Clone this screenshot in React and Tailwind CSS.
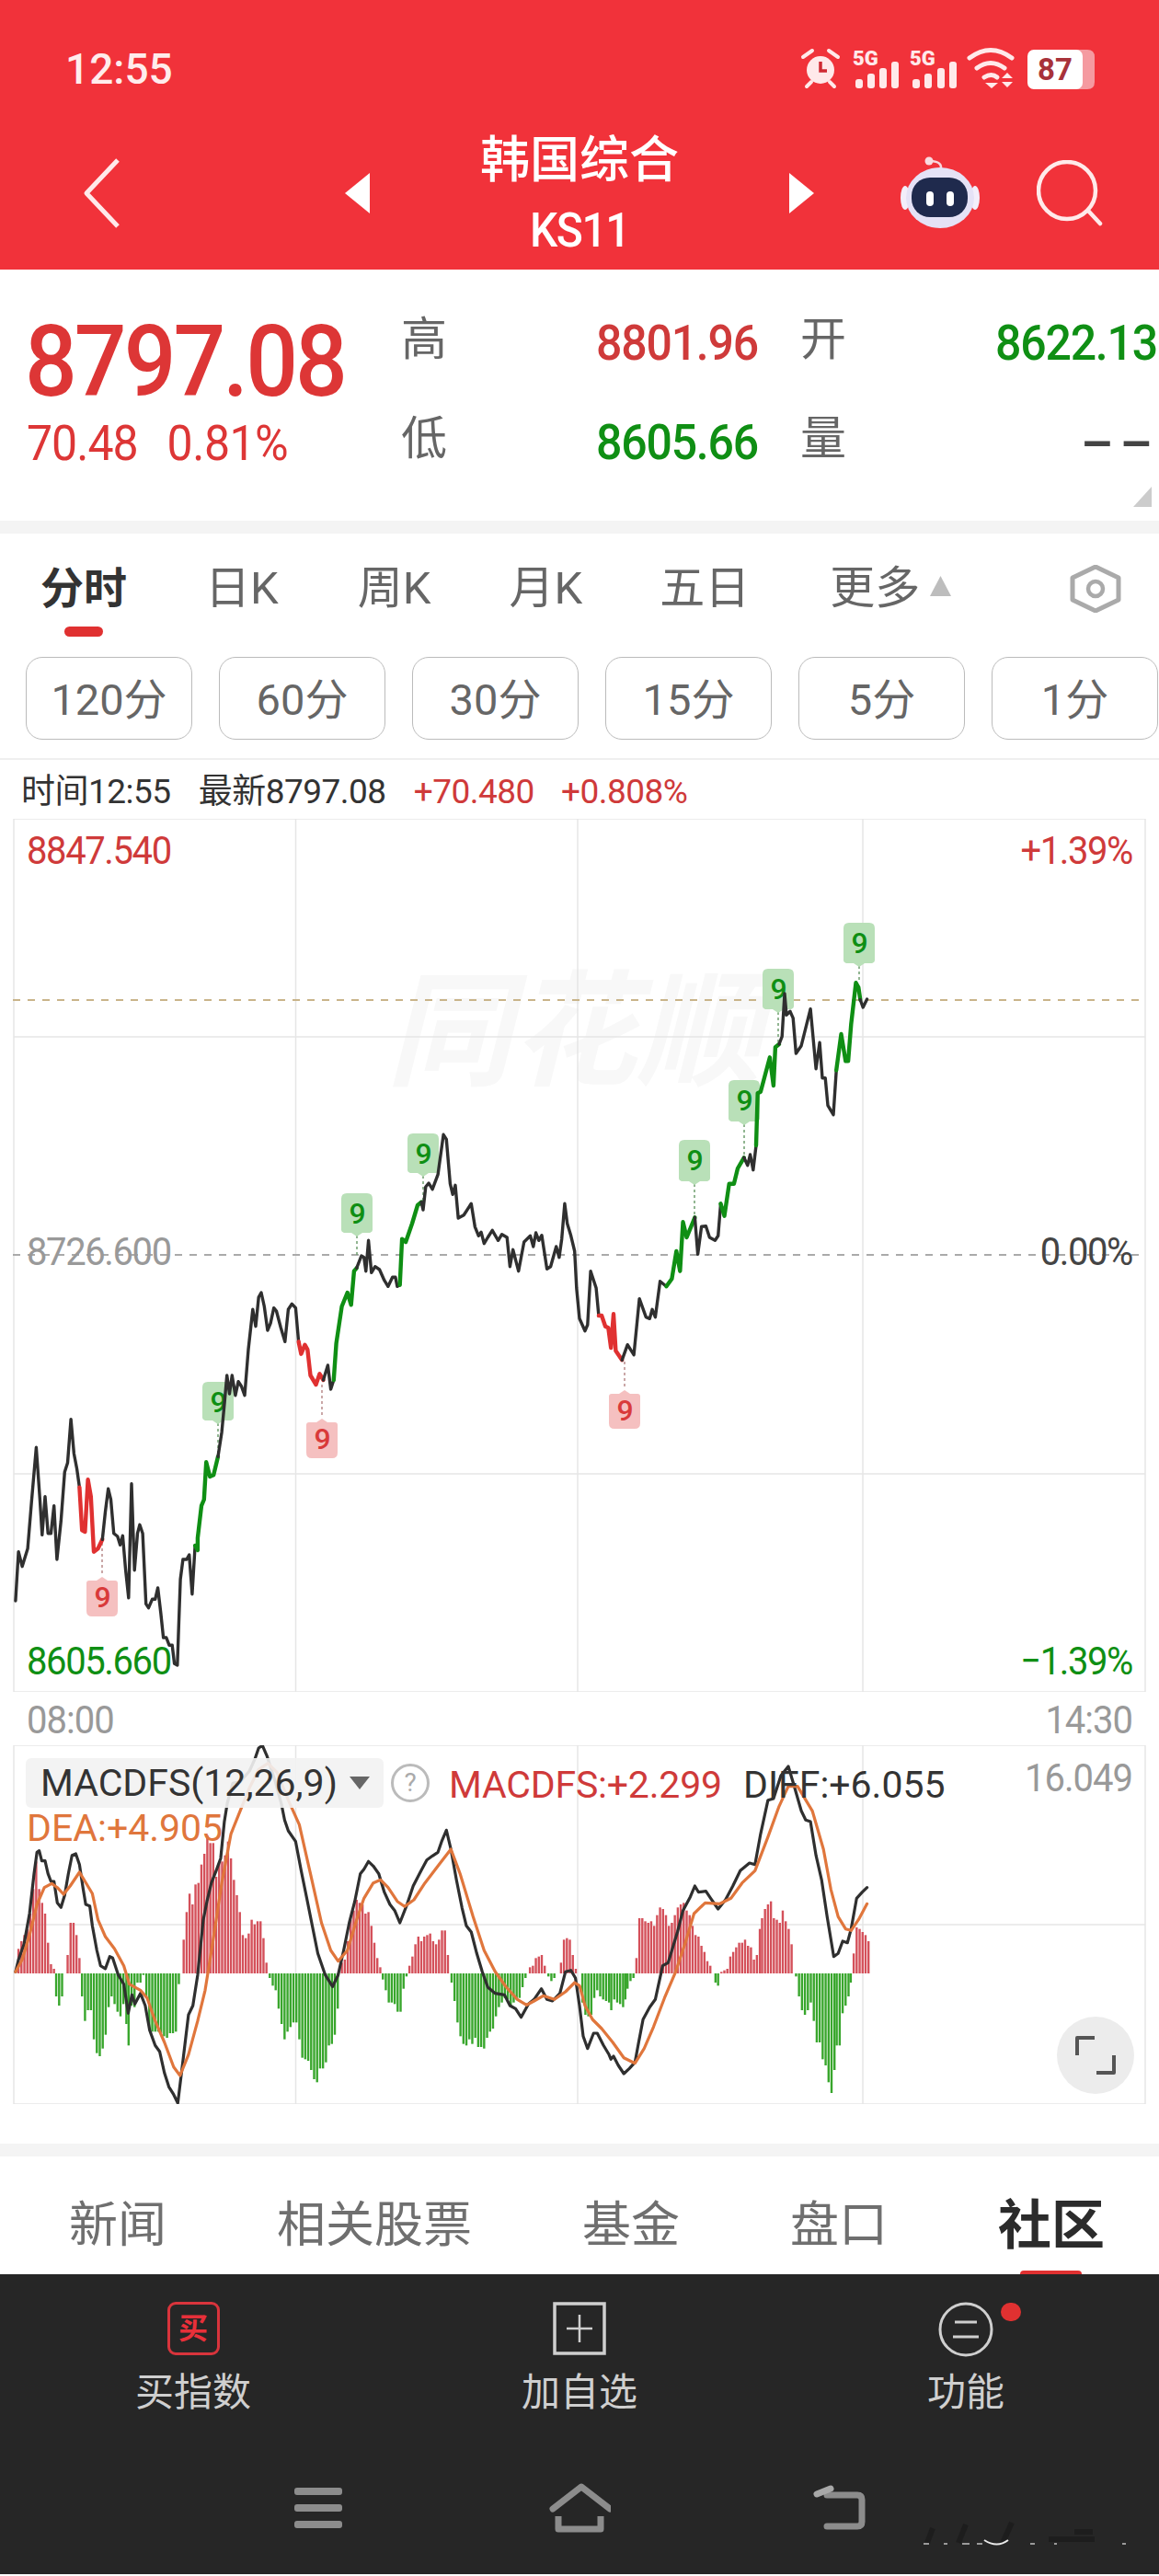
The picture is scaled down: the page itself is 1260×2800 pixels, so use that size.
import React from "react"

const BLACK = "#2f2f2f"
const GREEN = "#0f8f14"
const RED = "#e03131"

// trace helpers, each one maps a crop of the chart back to page pixels
const z3 = [0, 900]
const z4 = [630, 900]
const z5 = [0, 1400]
const z6 = [630, 1400]
const toPath = (parts) => {
  let d = ""
  parts.forEach(([org, pts]) => {
    for (let i = 0; i < pts.length; i += 2) {
      const x = org[0] + pts[i] / 2.489
      const y = org[1] + pts[i + 1] / 3
      d += `${d ? "L" : "M"}${x.toFixed(1)} ${y.toFixed(1)} `
    }
  })
  return d
}

const priceSegments = [
  [BLACK, [[z5, [42,1020,50,860,60,908,75,850,85,700,98,520,108,690,114,805,122,680,130,800,138,800,146,710,154,885,165,760,175,600,183,570,192,428,200,540,208,590,215,650]]]],
  [RED, [[z5, [215,650,222,790,230,795,238,625,246,680,254,860,265,850,277,820]]]],
  [BLACK, [[z5, [277,820,285,730,293,655,300,690,308,800,318,810,325,838,332,808,340,920,348,1010,356,638,364,920,372,800,378,772,386,800,395,1030,402,1043,412,1015,420,1015,427,978,435,1060,442,1140,450,1140,458,1165,466,1165,472,1225,480,1230,488,950,495,885,505,885,512,870,520,998,528,840]]]],
  [GREEN, [[z5, [528,840,535,855,535,815,545,710,552,690,558,568,568,615,578,610,590,550]]]],
  [BLACK, [[z5, [590,550,600,470,607,380,614,285,621,345,628,285,637,350,645,305,653,320,662,350,672,200,684,70,692,125,700,30,707,15,715,60,724,138,732,115,741,65,748,75,760,130,771,175,780,70,790,52,800,65,808,175]]]],
  [RED, [[z5, [808,175,815,215,825,185,832,200,840,285,855,315,865,280,875,300]]]],
  [BLACK, [[z5, [875,300,887,252,895,330,903,300]]]],
  [GREEN, [[z5, [903,300,910,180,925,60,940,15,950,55]], [z3, [958,1445,965,1435]]]],
  [BLACK, [[z3, [965,1435,978,1395,985,1400,990,1445,997,1345,1005,1450,1015,1430,1027,1440,1040,1475,1050,1495,1062,1465,1070,1465,1075,1495,1082,1490]]]],
  [GREEN, [[z3, [1082,1490,1088,1340,1098,1350,1115,1290,1130,1230,1140,1220]]]],
  [BLACK, [[z3, [1140,1220,1145,1245,1152,1170,1160,1158,1170,1178,1185,1130,1200,1000,1208,1015,1218,1160,1225,1195,1232,1165,1240,1272,1255,1262,1275,1225,1285,1300,1295,1330,1302,1318,1310,1355,1320,1335,1332,1312,1348,1345,1358,1325,1372,1335,1380,1430,1388,1375,1403,1445,1418,1350,1435,1330,1443,1365,1450,1320,1458,1345,1466,1328,1480,1438,1490,1430,1505,1365,1513,1400,1520,1340,1528,1225,1535,1290,1545,1330,1555,1380,1560,1500]], [z6, [0,100,15,140,22,120]], [z4, [30,1445,45,1500]], [z6, [52,90]]]],
  [RED, [[z6, [52,90,60,90,70,125,78,130,85,195,92,85,98,205,115,235]]]],
  [BLACK, [[z6, [115,235,130,185,147,218,162,35,180,95,190,100,197,70,205,95]], [z4, [218,1478,235,1495]]]],
  [GREEN, [[z4, [235,1495,250,1470,262,1380,272,1445,280,1285,290,1335,312,1270]]]],
  [BLACK, [[z4, [312,1270,320,1390,330,1300,342,1298,352,1335,367,1345,375,1330,382,1225]]]],
  [GREEN, [[z4, [382,1225,392,1265,405,1160,418,1160,428,1110,445,1075]]]],
  [BLACK, [[z4, [445,1075,455,1100,462,1065,470,1115,478,1035]]]],
  [GREEN, [[z4, [478,1035,482,865,490,860,515,748,525,840,530,715,540,705]]]],
  [BLACK, [[z4, [540,705,548,680,555,540,560,610,570,598,578,620,586,735,600,710,625,590,640,785,650,700,657,815,665,815,672,905,687,935,695,790]]]],
  [GREEN, [[z4, [695,790,708,672,720,760,727,760,735,640,748,505,755,520,760,560]]]],
  [BLACK, [[z4, [760,560,767,585,778,558]]]],
]

// x, badge top, tip, end of the dashed stem
const upBadges = [
  [237, 1502, 1547, 1583],
  [388, 1297, 1343, 1367],
  [460, 1232, 1278, 1307],
  [755, 1239, 1287, 1323],
  [809, 1174, 1222, 1258],
  [846, 1053, 1100, 1135],
  [934, 1003, 1050, 1068],
]
const downBadges = [
  [111, 1710, 1757, 1673],
  [350, 1538, 1585, 1502],
  [679, 1507, 1553, 1480],
]

const macdZ7 = [50,715,58,690,66,670,74,650,82,600,90,520,98,430,106,520,114,565,122,600,130,695,138,765,146,780,152,870,160,900,168,870,183,735,191,630,199,630,207,670,215,745,222,870,230,950,238,915,246,915,254,1010,262,1055,270,1065,278,1040,286,995,294,905,302,870,310,895,318,920,326,935,334,895,342,960,348,1030,356,900,364,905,372,825,380,825,388,800,396,870,404,980,412,985,420,985,428,985,436,990,444,1000,452,1005,460,990,468,990,476,985,484,830,497,685,505,595,513,535,521,570,529,505,537,500,545,440,553,405,561,345,569,370,577,370,585,480,593,430,601,430,609,410,617,365,625,420,633,490,641,540,649,595,657,670,665,680,673,665,681,620,689,635,697,625,705,625,713,680,721,760,730,810,738,835,746,850,754,910,762,960,770,1010,778,985,786,970,794,955,802,955,810,1010,818,1070,826,1075,834,1080,842,1110,850,1140,858,1150,866,1105,874,1105,882,1085,890,1030,898,1025,906,995,914,910,925,760,933,750,941,690,949,620,957,590,965,555,973,565,981,570,989,600,997,595,1005,640,1013,695,1021,745,1029,775,1036,815,1044,850,1052,890,1060,890,1068,895,1076,920,1084,920,1092,845,1100,805,1108,770,1116,740,1124,700,1132,675,1140,690,1148,675,1156,670,1164,665,1172,690,1180,700,1188,685,1196,655,1204,655,1212,735,1222,825,1230,885,1238,955,1246,1000,1254,1025,1262,1030,1270,1010,1278,1025,1286,1005,1294,1035,1302,1035,1310,1040,1318,1005,1326,985,1334,975,1342,935,1350,905,1358,890,1366,875,1374,880,1382,900,1390,890,1398,880,1406,875,1414,840,1422,810,1434,775,1442,770,1450,745,1458,740,1466,735,1474,770,1484,805,1492,820,1500,810,1518,760,1526,685,1534,680,1542,685,1550,735,1558,780]
const macdZ8 = [8,890,16,930,24,935,32,930,40,875,48,850,56,870,64,880,72,885,80,890,86,915,94,880,102,890,110,895,118,905,124,880,130,845,138,820,146,810,154,745,162,615,170,615,178,625,186,630,194,625,202,640,210,605,218,580,226,585,234,605,242,640,250,630,258,605,266,580,274,570,282,565,290,590,298,605,306,640,314,670,322,675,330,705,338,725,346,755,354,770,368,825,375,835,384,790,392,785,400,780,408,740,416,725,424,710,432,695,440,695,448,685,456,705,464,710,472,750,480,735,488,650,494,615,502,585,510,570,518,560,526,615,534,620,542,630,550,590,558,625,566,650,574,700,586,805,594,870,602,915,610,930,618,915,626,890,634,950,642,1020,650,1020,658,1075,666,1095,674,1150,682,1185,690,1110,696,1030,704,1030,712,925,720,900,728,870,734,825,742,730,750,645,758,650,766,660,774,670,782,690]

const macdBars = []
const pushBars = (org, list) => {
  for (let i = 0; i < list.length; i += 2) {
    macdBars.push([org + list[i] / 2.489, list[i + 1]])
  }
}
pushBars(0, macdZ7)
pushBars(630, macdZ8)

const y7 = [0, 1880]
const y8 = [630, 1880]
const diffPath = toPath([
  [y7, [42,790,50,750,65,700,80,600,92,470,100,400,106,395,113,428,122,428,130,470,138,495,146,495,155,565,165,580,175,540,185,470,195,410,205,405,215,440,225,520,232,570,243,575,250,640,262,720,272,770,285,780,297,740,305,745,320,800,335,830,347,925,357,865,365,895,380,860,393,900,405,980,420,1030,432,1050,445,1120,457,1165,470,1190,481,1218,495,1080,510,930,522,900,535,800,550,620,560,560,572,500,585,460,597,420,607,300,615,240,630,175,650,170,675,135,690,95,700,60,710,52,722,85,745,170,762,245,770,295,780,330,800,365,815,460,830,550,845,640,860,730,880,800,900,838,915,800,930,720,945,630,960,560,975,470,985,455,997,430,1010,445,1025,470,1040,530,1055,570,1068,590,1082,630,1100,575,1118,510,1135,470,1155,425,1170,412,1185,400,1195,365,1208,328,1220,390,1235,490,1250,580,1262,640,1275,660,1290,730,1305,790,1320,840,1340,860,1365,865,1380,900,1395,910,1410,938,1430,895,1445,880,1465,845,1480,880,1495,885,1515,860,1530,790,1545,785,1557,810,1568,900]],
  [y8, [10,1000,22,1040,38,990,48,990,65,1030,80,1060,85,1075,92,1065,105,1095,120,1122,135,1105,150,1085,160,1020,172,945,190,905,205,880,225,770,240,760,250,720,265,660,280,590,300,545,312,510,322,530,342,527,355,550,375,585,395,555,415,510,435,460,460,435,475,440,490,340,510,230,525,225,545,150,565,120,580,180,600,265,612,295,625,300,640,410,655,490,670,610,688,740,700,730,712,690,725,695,735,650,750,550,765,530,778,515]],
])
const deaPath = toPath([
  [y7, [42,790,60,750,80,670,100,570,120,515,140,502,155,515,172,537,190,510,215,465,235,505,250,535,265,620,285,675,310,715,335,770,350,830,380,850,398,875,420,950,445,1020,470,1100,487,1128,510,1060,535,950,555,850,575,700,600,500,625,340,650,265,675,190,700,130,725,110,750,140,780,230,810,310,840,470,870,630,895,720,915,755,940,720,965,620,985,550,1010,500,1030,490,1050,515,1075,560,1095,577,1120,555,1150,500,1185,445,1220,390,1245,470,1280,610,1310,720,1340,790,1370,840,1400,880,1425,898,1445,885,1470,868,1500,880,1530,855,1555,825,1568,835]],
  [y8, [15,900,35,945,60,975,90,1020,120,1070,150,1088,175,1040,200,970,230,875,260,790,285,700,310,600,340,565,380,568,410,550,440,500,475,460,510,350,540,250,565,185,590,185,630,265,660,390,680,520,700,610,720,650,735,655,755,620,778,568]],
])

const GridLines = ({ top, bottom, rows }) => (
  <g stroke="#e6e6e6" strokeWidth="1.5">
    {[15, 321.5, 628, 938, 1245].map((x) => (
      <line key={x} x1={x} x2={x} y1={top} y2={bottom} />
    ))}
    {rows.map((y) => (
      <line key={y} x1={15} x2={1245} y1={y} y2={y} />
    ))}
  </g>
)

const PriceChart = () => (
  <svg className="absolute inset-0" width="1260" height="949" viewBox="0 890 1260 949" fill="none">
    <GridLines top={890} bottom={1839} rows={[890, 1127, 1602, 1839]} />
    <line x1="14" x2="1245" y1="1087" y2="1087" stroke="#c9b48a" strokeWidth="2" strokeDasharray="8 8" />
    <line x1="14" x2="1245" y1="1364" y2="1364" stroke="#aaaaaa" strokeWidth="2" strokeDasharray="8 8" />
    {upBadges.map(([x, top, tip, stem]) => (
      <g key={x}>
        <line x1={x} x2={x} y1={tip} y2={stem} stroke="#6f9f6f" strokeWidth="1.5" strokeDasharray="3 3" />
        <path
          d={`M${x - 17} ${top + 6} q0 -6 6 -6 h22 q6 0 6 6 v${tip - top - 12} q0 2 -3 3 h-8 l-6 4 l-6 -4 h-8 q-3 -1 -3 -3 z`}
          fill="#b9e0b8"
        />
        <text x={x} y={top + 33} textAnchor="middle" fontSize="32" fontWeight="500" fill={GREEN}>9</text>
      </g>
    ))}
    {downBadges.map(([x, top, tip, stem]) => (
      <g key={x}>
        <line x1={x} x2={x} y1={top} y2={stem} stroke="#b98a8a" strokeWidth="1.5" strokeDasharray="3 3" />
        <path
          d={`M${x - 17} ${top + 11} q0 -3 3 -3 h8 l6 -4 l6 4 h8 q3 0 3 3 v${tip - top - 17} q0 6 -6 6 h-22 q-6 0 -6 -6 z`}
          fill="#f5c0c0"
        />
        <text x={x} y={top + 37} textAnchor="middle" fontSize="32" fontWeight="500" fill="#d93a3a">9</text>
      </g>
    ))}
    {priceSegments.map(([color, parts], i) => (
      <path
        key={i}
        d={toPath(parts)}
        stroke={color}
        strokeWidth={color === BLACK ? 3.4 : 4.4}
        strokeLinejoin="round"
        strokeLinecap="round"
      />
    ))}
  </svg>
)

const MacdChart = () => (
  <svg className="absolute inset-0" width="1260" height="390" viewBox="0 1897 1260 390" fill="none">
    <GridLines top={1897} bottom={2287} rows={[1897, 2092, 2287]} />
    {macdBars.map(([x, top]) => {
      const up = top < 795
      const y = 1880 + top / 3
      return (
        <rect
          key={x}
          x={x - 1.2}
          y={up ? y : 2145}
          width="2.4"
          height={Math.abs(y - 2145)}
          fill={up ? "#d4505a" : "#38a62c"}
        />
      )
    })}
    <path d={diffPath} stroke={BLACK} strokeWidth="3.2" strokeLinejoin="round" strokeLinecap="round" />
    <path d={deaPath} stroke="#e0763c" strokeWidth="3.2" strokeLinejoin="round" strokeLinecap="round" />
  </svg>
)

const StatusIcons = () => (
  <svg width="340" height="70" viewBox="860 40 340 70" fill="none">
    {/* alarm */}
    <circle cx="892" cy="76" r="15" fill="#ffe9ea" />
    <path d="M892 67v10h7" stroke="#cf2a33" strokeWidth="3.5" />
    <path d="M873 62l10 -7M911 62l-10 -7M877 94l5 -5M907 94l-5 -5" stroke="#ffe9ea" strokeWidth="4" strokeLinecap="round" />
    {/* sim 1 */}
    <text x="927" y="71" fontSize="22" fontWeight="900" fill="#ffe9ea">5G</text>
    {[[930, 86], [943, 80], [956, 74], [969, 67]].map(([x, y]) => (
      <rect key={x} x={x} y={y} width="8" height={96 - y} rx="3" fill="#ffe9ea" />
    ))}
    {/* sim 2 */}
    <text x="989" y="71" fontSize="22" fontWeight="900" fill="#ffe9ea">5G</text>
    {[[992, 86], [1005, 80], [1019, 74], [1032, 67]].map(([x, y]) => (
      <rect key={x} x={x} y={y} width="8" height={96 - y} rx="3" fill="#ffe9ea" />
    ))}
    {/* wifi */}
    <path d="M1054 63q23 -17 46 0M1062 74q15 -11 30 0M1070 84q8 -5 14 0" stroke="#ffe9ea" strokeWidth="5" strokeLinecap="round" />
    <path d="M1071 90h14l-7 6zM1089 85l6 -6 6 6zM1089 89h12l-6 6z" fill="#ffe9ea" />
    {/* battery */}
    <path d="M1170 54h12q8 0 8 8v27q0 8 -8 8h-12z" fill="#f59aa0" />
    <rect x="1117" y="54" width="60" height="43" rx="7" fill="#ffffff" />
    <text x="1147" y="87" textAnchor="middle" fontSize="33" fontWeight="700" fill="#a8323a">87</text>
  </svg>
)

const Robot = () => (
  <svg width="95" height="85" viewBox="975 165 95 85" fill="none">
    <path d="M1023 180q1 -8 -13 -8" stroke="#f7d6dc" strokeWidth="2.5" />
    <circle cx="1010" cy="172" r="4.5" fill="#f9dbe0" />
    <ellipse cx="984" cy="212" rx="5" ry="13" fill="#f3eefa" />
    <ellipse cx="1060" cy="212" rx="5" ry="13" fill="#f3eefa" />
    <ellipse cx="1022" cy="212" rx="37" ry="33" fill="#e5e2f6" />
    <rect x="991" y="190" width="61" height="43" rx="20" fill="#1f2a4d" />
    <rect x="1007" y="205" width="8" height="16" rx="4" fill="#ffffff" />
    <rect x="1029" y="205" width="8" height="16" rx="4" fill="#ffffff" />
  </svg>
)

const App = () => {
  return (
    <div className="w-[1260px] h-[2800px] bg-white overflow-hidden font-['Roboto','Noto_Sans_CJK_SC',sans-serif]">
      {/* Red header */}
      <div className="h-[293px] bg-[#f1323a] text-white">
        <div className="pt-[40px]">
          <div className="h-[70px] flex items-center justify-between pl-[71px] pr-[60px]">
            <span className="text-[46px] font-medium leading-none text-[#ffecec]">12:55</span>
            <StatusIcons />
          </div>
        </div>
        <div className="mt-[40px] h-[120px] flex items-center pl-[90px]">
          <svg width="40" height="76" viewBox="0 0 40 76" fill="none">
            <path d="M38 2L4 38l34 36" stroke="#ffe9ea" strokeWidth="5" strokeLinejoin="round" />
          </svg>
          <svg className="ml-[245px]" width="27" height="44" viewBox="0 0 27 44">
            <path d="M27 0v44L0 22z" fill="#ffffff" />
          </svg>
          <div className="w-[456px] flex flex-col items-center pt-[3px]">
            <span className="text-[54px] font-medium leading-none">韩国综合</span>
            <span className="mt-[25px] text-[48px] font-medium leading-none tracking-[-1.5px] scale-y-[1.08]">KS11</span>
          </div>
          <svg width="27" height="44" viewBox="0 0 27 44">
            <path d="M0 0v44l27 -22z" fill="#ffffff" />
          </svg>
          <div className="ml-[90px]">
            <Robot />
          </div>
          <svg className="ml-[57px]" width="72" height="72" viewBox="0 0 72 72" fill="none">
            <circle cx="33" cy="33" r="31" stroke="#ffeaea" strokeWidth="4.5" />
            <path d="M56 55l13 14" stroke="#ffeaea" strokeWidth="4.5" strokeLinecap="round" />
          </svg>
        </div>
      </div>

      {/* Quote */}
      <div className="relative h-[273px] flex">
        <div className="w-[436px] pl-[29px] pt-[51px] text-[#dd3636]">
          <div className="text-[100px] font-medium leading-none tracking-[-3px] -ml-[2px] scale-y-[1.07] origin-center">8797.08</div>
          <div className="mt-[13px] flex text-[50px] leading-none tracking-[-1px] scale-y-[1.07]">
            <span>70.48</span>
            <span className="ml-[32px] tracking-[-0.5px]">0.81%</span>
          </div>
        </div>
        <div className="pt-[51px] grid grid-cols-[388px_388px] gap-x-[46px] auto-rows-[108px] text-[50px] leading-none">
          <div className="flex justify-between items-start">
            <span className="text-[#666666]">高</span>
            <span className="text-[#cf3a3a] font-medium tracking-[-1.2px] pt-[4px] scale-y-[1.07]">8801.96</span>
          </div>
          <div className="flex justify-between items-start">
            <span className="text-[#666666]">开</span>
            <span className="text-[#0f8f14] font-medium tracking-[-1.2px] pt-[4px] scale-y-[1.07]">8622.13</span>
          </div>
          <div className="flex justify-between items-start">
            <span className="text-[#666666]">低</span>
            <span className="text-[#0f8f14] font-medium tracking-[-1.2px] pt-[4px] scale-y-[1.07]">8605.66</span>
          </div>
          <div className="flex justify-between items-start">
            <span className="text-[#666666]">量</span>
            <span className="text-[#444444] font-bold pt-[4px]">
              <span className="inline-block origin-right scale-x-[2] tracking-[1.5px]">--</span>
            </span>
          </div>
        </div>
        <svg className="absolute right-[8px] bottom-[15px]" width="20" height="22" viewBox="0 0 20 22">
          <path d="M0 22h20V0z" fill="#cccccc" />
        </svg>
      </div>
      <div className="h-[14px] bg-[#f4f4f4]" />

      {/* Period tabs */}
      <div className="h-[246px] border-b-2 border-[#efefef] pt-[36px]">
        <div className="h-[47px] flex items-center pl-[44px] text-[49px] leading-none text-[#666666]">
          <span className="relative text-[47px] font-bold text-[#333333]">
            分时
            <span className="absolute left-[26px] top-[65px] w-[42px] h-[11px] rounded-full bg-[#e03131]" />
          </span>
          <span className="ml-[85px]">日K</span>
          <span className="ml-[86px]">周K</span>
          <span className="ml-[85px]">月K</span>
          <span className="ml-[84px]">五日</span>
          <span className="ml-[87px]">更多</span>
          <svg className="ml-[11px] -mt-[6px]" width="23" height="22" viewBox="0 0 23 22">
            <path d="M11.5 0L23 22H0z" fill="#bdbdbd" />
          </svg>
          <svg className="ml-[129px]" width="56" height="52" viewBox="0 0 56 52" fill="none">
            <path d="M28 2l25 12v24L28 50 3 38V14z" stroke="#aaaaaa" strokeWidth="5" strokeLinejoin="round" />
            <circle cx="28" cy="26" r="8" stroke="#aaaaaa" strokeWidth="4.5" />
          </svg>
        </div>
        <div className="mt-[51px] pl-[28px] flex gap-[29px]">
          {["120分", "60分", "30分", "15分", "5分", "1分"].map((t) => (
            <div
              key={t}
              className="w-[181px] h-[90px] shrink-0 flex items-center justify-center pt-[3px] rounded-[18px] border border-[#bbbbbb] text-[47px] leading-none text-[#666666]"
            >
              {t}
            </div>
          ))}
        </div>
      </div>

      {/* Latest line */}
      <div className="h-[64px] flex items-center pt-[4px] pl-[23px] text-[37px] leading-none tracking-[-0.5px] text-[#333333]">
        <span>时间12:55</span>
        <span className="ml-[30px]">最新8797.08</span>
        <span className="ml-[30px] text-[#cf3a3a]">+70.480</span>
        <span className="ml-[29px] text-[#cf3a3a]">+0.808%</span>
      </div>

      {/* Price chart */}
      <div className="relative h-[949px] text-[40px] leading-none tracking-[-1.4px]">
        <div className="absolute left-[420px] top-[165px] text-[136px] font-bold italic leading-none tracking-normal text-[#f8f8f8]">
          同花顺
        </div>
        <PriceChart />
        <span className="absolute left-[29px] top-[15px] scale-y-[1.08] text-[#cf3a3a]">8847.540</span>
        <span className="absolute right-[29px] top-[15px] scale-y-[1.08] text-[#cf3a3a]">+1.39%</span>
        <span className="absolute left-[29px] top-[451px] scale-y-[1.08] text-[#999999]">8726.600</span>
        <span className="absolute right-[29px] top-[451px] scale-y-[1.08] text-[#444444]">0.00%</span>
        <span className="absolute left-[29px] top-[896px] scale-y-[1.08] text-[#0f8f14]">8605.660</span>
        <span className="absolute right-[29px] top-[896px] scale-y-[1.08] text-[#0f8f14]">−1.39%</span>
      </div>
      <div className="h-[58px] flex items-center justify-between pt-[4px] pl-[29px] pr-[29px] text-[40px] leading-none tracking-[-1px] text-[#999999]">
        <span className="scale-y-[1.08]">08:00</span>
        <span className="scale-y-[1.08]">14:30</span>
      </div>

      {/* MACD */}
      <div className="relative h-[390px]">
        <MacdChart />
        <div className="absolute left-[28px] top-[14px] w-[389px] h-[54px] flex items-center pl-[16px] rounded-md bg-[#f2f2f2]/90 text-[41px] leading-none text-[#333333]">
          MACDFS(12,26,9)
          <svg className="ml-[13px]" width="22" height="14" viewBox="0 0 22 14">
            <path d="M0 0h22L11 14z" fill="#666666" />
          </svg>
        </div>
        <div className="absolute left-[425px] top-[20px] w-[42px] h-[42px] flex items-center justify-center rounded-full border-[3px] border-[#bbbbbb] text-[28px] leading-none text-[#aaaaaa]">
          ?
        </div>
        <span className="absolute left-[488px] top-[23px] text-[41px] leading-none tracking-[-0.2px] text-[#cf3a3a]">MACDFS:+2.299</span>
        <span className="absolute left-[808px] top-[23px] text-[41px] leading-none text-[#333333]">DIFF:+6.055</span>
        <span className="absolute right-[29px] top-[16px] text-[40px] leading-none tracking-[-1px] scale-y-[1.08] text-[#999999]">16.049</span>
        <span className="absolute left-[29px] top-[70px] text-[41px] leading-none text-[#e0763c]">DEA:+4.905</span>
        <div className="absolute left-[1149px] top-[295px] w-[84px] h-[84px] flex items-center justify-center rounded-full bg-[#ececec]">
          <svg width="44" height="44" viewBox="0 0 44 44" fill="none">
            <path d="M2 22V3h19M42 22v19H23" stroke="#555555" strokeWidth="4" strokeLinejoin="round" />
          </svg>
        </div>
      </div>

      <div className="h-[43px]" />
      <div className="h-[14px] bg-[#f4f4f4]" />

      {/* Bottom tabs */}
      <div className="relative h-[128px] pt-[48px] pl-[75px]">
        <div className="h-[54px] flex items-center gap-[120px] text-[53px] leading-none text-[#6f6f6f]">
          <span>新闻</span>
          <span>相关股票</span>
          <span>基金</span>
          <span>盘口</span>
          <span className="text-[58px] font-bold text-[#2b2b2b]">社区</span>
        </div>
        <div className="absolute left-[1109px] bottom-0 w-[67px] h-[4px] rounded-t bg-[#e03131]" />
      </div>

      {/* Action bar */}
      <div className="relative h-[326px] bg-[#262626] pt-[30px]">
        <div className="grid grid-cols-3 text-[42px] leading-none text-[#cfcfcf]">
          <div className="flex flex-col items-center">
            <div className="w-[57px] h-[58px] flex items-center justify-center rounded-[9px] border-[3px] border-[#d8343c] text-[32px] leading-none font-bold text-[#e8303a]">
              买
            </div>
            <span className="mt-[20px]">买指数</span>
          </div>
          <div className="flex flex-col items-center">
            <svg width="58" height="58" viewBox="0 0 58 58" fill="none">
              <rect x="2" y="2" width="54" height="54" stroke="#cfcfcf" strokeWidth="3.5" />
              <path d="M29 14v30M15 29h28" stroke="#cfcfcf" strokeWidth="2.5" />
            </svg>
            <span className="mt-[20px]">加自选</span>
          </div>
          <div className="relative flex flex-col items-center">
            <svg width="60" height="60" viewBox="0 0 60 60" fill="none">
              <circle cx="30" cy="30" r="28" stroke="#cfcfcf" strokeWidth="3" />
              <path d="M18 22h24M16 38h28" stroke="#cfcfcf" strokeWidth="3" />
            </svg>
            <div className="absolute left-[248px] top-[1px] w-[22px] h-[20px] rounded-full bg-[#e03131]" />
            <span className="mt-[18px]">功能</span>
          </div>
        </div>
        <div className="mt-[77px] flex justify-center items-center gap-[220px]">
          <div className="w-[60px] flex flex-col items-center gap-[10px]">
            <div className="w-[52px] h-[8px] rounded-[3px] bg-[#8c8c8c]" />
            <div className="w-[52px] h-[8px] rounded-[3px] bg-[#8c8c8c]" />
            <div className="w-[52px] h-[8px] rounded-[3px] bg-[#8c8c8c]" />
          </div>
          <svg width="68" height="54" viewBox="596 2700 68 54" fill="none">
            <path d="M601 2728l31 -24 31 24" stroke="#8c8c8c" strokeWidth="7" strokeLinecap="round" strokeLinejoin="round" />
            <path d="M607 2736v14h46v-14" stroke="#8c8c8c" strokeWidth="7" strokeLinejoin="round" />
          </svg>
          <svg width="60" height="54" viewBox="880 2700 60 54" fill="none">
            <path d="M895 2713h33q5 0 5 5v24q0 5 -5 5h-33" stroke="#8c8c8c" strokeWidth="7" strokeLinecap="round" />
            <path d="M884 2712l15 -6" stroke="#a8a8a8" strokeWidth="7" strokeLinecap="round" />
          </svg>
        </div>
        {/* smudged-out corner mark */}
        <svg className="absolute left-[990px] top-[240px]" width="250" height="60" viewBox="0 0 250 60" fill="none">
          <g stroke="#1c1c1c" strokeWidth="6" opacity="0.8">
            <path d="M24 36l-6 16M60 32l-8 20M110 30l-10 22M150 48h50M178 40h20" />
          </g>
          <g stroke="#9a9a9a" strokeWidth="2">
            <path d="M14 53h6M36 53h4M56 53h8M72 53h6M130 53h5M156 53h3M230 53h4" />
          </g>
          <path d="M80 49q14 9 26 0" stroke="#e8e8e8" strokeWidth="2" />
        </svg>
      </div>
    </div>
  )
}

export default App
